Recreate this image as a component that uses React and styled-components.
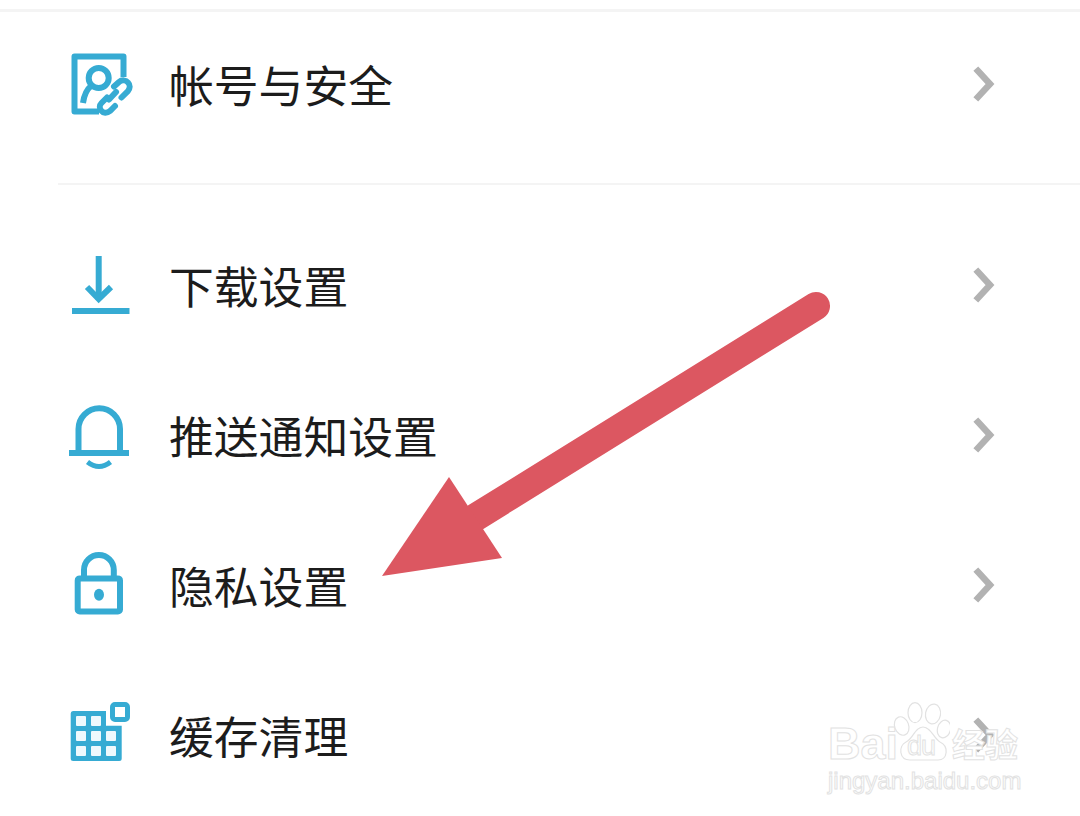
import React from 'react'
import styled, { createGlobalStyle } from 'styled-components'

const GlobalStyle = createGlobalStyle`
  html, body {
    margin: 0;
    padding: 0;
    background: #fff;
  }
`

const Page = styled.div`
  position: relative;
  width: 1080px;
  height: 816px;
  overflow: hidden;
  background: #fff;
  padding-top: 9px;
  box-sizing: border-box;
  font-family: "Noto Sans CJK SC", "Liberation Sans", sans-serif;
`

const TopRule = styled.div`
  height: 3px;
  background: #f4f4f4;
`

const FirstGroup = styled.div`
  height: 173px;
  box-sizing: border-box;
  border-bottom: 2px solid #f4f4f4;
  margin-left: 58px;
`

const Row = styled.div`
  display: flex;
  align-items: center;
  height: ${props => props.$height || 150}px;
  padding-right: 84px;
  padding-left: ${props => props.$flush ? 6 : 64}px;
`

const IconSlot = styled.svg`
  flex: none;
  width: 70px;
  height: 70px;
  margin-right: 35px;
  fill: none;
  stroke: #36abd3;
  stroke-width: 6;
`

const Label = styled.span`
  flex: 1;
  font-size: 44.8px;
  line-height: 60px;
  margin-top: -2px;
  color: #1c1c1c;
`

const Chevron = styled.svg`
  flex: none;
  width: 24px;
  height: 40px;
  fill: none;
  stroke: #b2b2b2;
  stroke-width: 6.5;
  stroke-linecap: square;
  margin-top: -2px;
`

const List = styled.div`
  padding-top: 26px;
`

const ArrowLayer = styled.svg`
  position: absolute;
  left: 0;
  top: 0;
  width: 1080px;
  height: 816px;
  pointer-events: none;
`

const Watermark = styled.div`
  position: absolute;
  left: 828px;
  top: 695px;
  width: 200px;
  color: #fff;
  font-family: "Liberation Sans", sans-serif;
  -webkit-text-stroke: 1px #e2e2e2;
`

const MarkLine = styled.div`
  display: flex;
  align-items: flex-end;
  height: 66px;
`

const MarkWord = styled.span`
  font-size: 45px;
  line-height: 50px;
  font-weight: 700;
  margin-bottom: -8px;
`

const Paw = styled.div`
  position: relative;
  flex: none;
  width: 60px;
  height: 65px;
  margin-left: -8px;
`

const PawWord = styled.span`
  position: absolute;
  left: 17px;
  top: 36px;
  font-size: 27px;
  line-height: 28px;
  letter-spacing: -1px;
`

const MarkCjk = styled.span`
  font-family: "Noto Sans CJK SC", sans-serif;
  font-size: 33px;
  line-height: 44px;
  font-weight: 700;
  margin-left: 2px;
  margin-bottom: -4px;
`

const MarkUrl = styled.div`
  font-size: 24px;
  line-height: 28px;
  margin-top: 6px;
  white-space: nowrap;
`

const AccountIcon = () => (
  <IconSlot viewBox="0 0 70 70">
    <path d="M59.5 27V6.5H10.5V61.5H35" strokeLinejoin="round" />
    <circle cx="34.7" cy="28" r="10" />
    <path d="M27 36C22 40 20 46 19 53" />
    <path d="M40 60L62 38" stroke="#fff" strokeWidth="18" />
    <path d="M50 36.5L55 32C58 29.5 62 30 64 32.5C66.5 35 66 38.5 64 41L57.5 47.5" strokeLinecap="round" />
    <path d="M52 42L45 49.5" strokeLinecap="round" />
    <path d="M51 56L46 61C43 63.5 39 63 37.5 61C35 58.5 35.5 55 37.5 53L43 47.5" strokeLinecap="round" />
  </IconSlot>
)

const DownloadIcon = () => (
  <IconSlot viewBox="0 0 70 70">
    <path d="M34.7 5V49" />
    <path d="M23 36L34.7 48L47 36" />
    <path d="M8 60H65.5" />
  </IconSlot>
)

const BellIcon = () => (
  <IconSlot viewBox="0 0 70 70">
    <path d="M14.5 52V28A20.7 20.7 0 0 1 56 28V52" />
    <path d="M5 52H65" />
    <path d="M23.5 61Q35 70 46.5 61" strokeWidth="5" />
  </IconSlot>
)

const LockIcon = () => (
  <IconSlot viewBox="0 0 70 70">
    <rect x="13.7" y="27.4" width="42.3" height="33" rx="2" />
    <path d="M20 27V19A14.9 14.9 0 0 1 49.8 19V27" />
    <ellipse cx="35" cy="43.7" rx="5" ry="6" fill="#36abd3" stroke="none" />
  </IconSlot>
)

const cells = [
  [17, 20], [32, 20],
  [17, 35], [32, 35], [47, 35],
  [17, 50], [32, 50], [47, 50]
]

const CacheIcon = () => (
  <IconSlot viewBox="0 0 70 70">
    <path
      d="M9 10H42V24.7H57.7V57.5A2.5 2.5 0 0 1 55.2 60H9.2A2.5 2.5 0 0 1 6.7 57.5V12.5A2.5 2.5 0 0 1 9 10Z"
      fill="#36abd3"
      stroke="none"
    />
    {cells.map(([x, y]) => (
      <rect key={`${x}-${y}`} x={x - 5} y={y - 5} width="10" height="10" rx="1" fill="#eef9fd" stroke="none" />
    ))}
    <rect x="48.5" y="3.5" width="15" height="15" rx="2.5" strokeWidth="5" />
  </IconSlot>
)

const ChevronIcon = () => (
  <Chevron viewBox="0 0 24 40">
    <path d="M6 7L18 20L6 33" />
  </Chevron>
)

const items = [
  { label: '下载设置', Icon: DownloadIcon },
  { label: '推送通知设置', Icon: BellIcon },
  { label: '隐私设置', Icon: LockIcon },
  { label: '缓存清理', Icon: CacheIcon }
]

function App () {
  return (
    <Page>
      <GlobalStyle />
      <TopRule />
      <FirstGroup>
        <Row $height={145} $flush>
          <AccountIcon />
          <Label>帐号与安全</Label>
          <ChevronIcon />
        </Row>
      </FirstGroup>
      <List>
        {items.map(({ label, Icon }) => (
          <Row key={label}>
            <Icon />
            <Label>{label}</Label>
            <ChevronIcon />
          </Row>
        ))}
      </List>
      <ArrowLayer viewBox="0 0 1080 816">
        <path d="M816 306L476 517" stroke="#dc5761" strokeWidth="28" strokeLinecap="round" />
        <path d="M449 477L502 558L382 576Z" fill="#dc5761" />
      </ArrowLayer>
      <Watermark>
        <MarkLine>
          <MarkWord>Bai</MarkWord>
          <Paw>
            <svg width="60" height="65" viewBox="0 0 60 65" fill="#fff" stroke="#e2e2e2" strokeWidth="1.2">
              <ellipse cx="11.7" cy="30" rx="7" ry="9.5" transform="rotate(-20 11.7 30)" />
              <ellipse cx="25" cy="16.7" rx="7" ry="10" />
              <ellipse cx="43" cy="18" rx="7.5" ry="10" transform="rotate(10 43 18)" />
              <ellipse cx="54" cy="33" rx="6.5" ry="9" transform="rotate(15 54 33)" />
              <path d="M33 31C41 31 44 43 50 46C59 50 58 64 48 64H20C9 64 8 50 16 46C23 43 25 31 33 31Z" />
            </svg>
            <PawWord>du</PawWord>
          </Paw>
          <MarkCjk>经验</MarkCjk>
        </MarkLine>
        <MarkUrl>jingyan.baidu.com</MarkUrl>
      </Watermark>
    </Page>
  )
}

export default App
